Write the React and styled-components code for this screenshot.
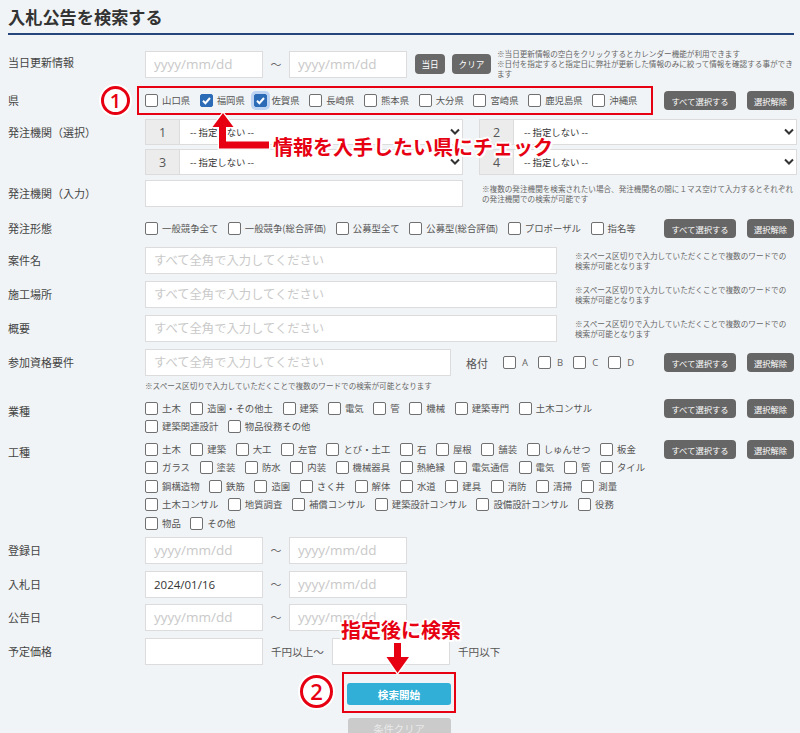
import React from 'react';
import styled, { createGlobalStyle } from 'styled-components';

const RED = '#e60012';

const GlobalStyle = createGlobalStyle`
  html, body { margin: 0; padding: 0; background: #f1f4f6; }
  body { font-family: "Noto Sans CJK JP", "Noto Sans", sans-serif; color: #333; }
  * { box-sizing: border-box; }
`;

const Page = styled.div`
  position: relative;
  width: 800px;
  height: 733px;
  overflow: hidden;
  padding: 4px 6px 0 8px;
`;

const Title = styled.h1`
  margin: 0;
  font-size: 17.2px;
  font-weight: 700;
  line-height: 26px;
  color: #333;
  padding-bottom: 3px;
  border-bottom: 2px solid #26457c;
`;

const Row = styled.div`
  display: flex;
  align-items: flex-start;
  margin-top: ${({ $mt }) => $mt}px;
`;

const Label = styled.div`
  width: 137px;
  flex-shrink: 0;
  font-size: 11px;
  color: #444;
  white-space: nowrap;
  line-height: ${({ $lh }) => $lh}px;
  padding-top: ${({ $pt }) => $pt || 0}px;
`;

const Field = styled.div`
  flex: 1;
  min-width: 0;
  display: flex;
  align-items: center;
  height: ${({ $h }) => ($h ? `${$h}px` : 'auto')};
`;

const Stack = styled.div`
  flex: 1;
  min-width: 0;
  display: flex;
  flex-direction: column;
`;

const TextInput = styled.input`
  width: ${({ $w }) => $w}px;
  height: 27px;
  flex-shrink: 0;
  border: 1px solid #dcdcdc;
  border-radius: 0;
  background: #fff;
  padding: 0 8px;
  font-family: "Open Sans", "Noto Sans CJK JP", sans-serif;
  font-size: 11.5px;
  color: #333;
  outline: none;
  &::placeholder {
    color: #c9c9c9;
    font-size: ${({ $ph }) => $ph || 12.3}px;
  }
`;

const Tilde = styled.span`
  width: 26px;
  flex-shrink: 0;
  text-align: center;
  font-size: 11px;
  color: #666;
`;

const Unit = styled.span`
  font-size: 10.6px;
  color: #555;
  margin: 0 8px;
  white-space: nowrap;
`;

const SmallBtn = styled.button`
  width: ${({ $w }) => $w}px;
  height: 20px;
  flex-shrink: 0;
  margin-left: ${({ $ml }) => $ml}px;
  border: none;
  border-radius: 4px;
  background: #696969;
  color: #fff;
  font-family: inherit;
  font-size: 8.6px;
  padding: 0;
`;

const Note = styled.div`
  width: ${({ $w }) => $w}px;
  margin-left: ${({ $ml }) => $ml || 0}px;
  margin-top: ${({ $mt }) => $mt || 0}px;
  font-size: 7.6px;
  line-height: 10px;
  color: #666;
  flex-shrink: 0;
`;

const ActionGroup = styled.div`
  display: flex;
  gap: 11px;
  margin-left: auto;
  align-self: ${({ $top }) => ($top ? 'flex-start' : 'center')};
`;

const ActionBtn = styled.button`
  width: ${({ $w }) => $w}px;
  height: 19px;
  border: none;
  border-radius: 4px;
  background: #666;
  color: #fff;
  font-family: inherit;
  font-size: 8.3px;
  padding: 0;
`;

const PrefBox = styled.div`
  display: flex;
  align-items: center;
  width: 516px;
  height: 29px;
  margin-left: -8px;
  padding-left: 6px;
  border: 2px solid ${RED};
`;

const CheckItem = styled.label`
  display: inline-flex;
  align-items: center;
  gap: ${({ $gap }) => $gap || 4}px;
  margin-right: ${({ $mr }) => $mr || 9.6}px;
  font-size: 9.4px;
  color: #555;
  white-space: nowrap;
  line-height: 1;
`;

const Box = styled.span`
  width: 13px;
  height: 13px;
  flex-shrink: 0;
  display: inline-flex;
  align-items: center;
  justify-content: center;
  border: 1px solid ${({ $on }) => ($on ? '#2c6cb6' : '#707070')};
  border-radius: 2px;
  background: ${({ $on }) => ($on ? '#2c6cb6' : '#fff')};
  box-shadow: ${({ $focus }) => ($focus ? '0 0 0 3px #bcd4f2' : 'none')};
`;

const Latin = styled.span`
  font-family: "Open Sans", sans-serif;
  font-size: 9.5px;
  color: #666;
`;

const CheckLines = styled.div`
  display: flex;
  flex-direction: column;
`;

const CheckLine = styled.div`
  display: flex;
  align-items: center;
  height: 18.5px;
`;

const SelectGrid = styled.div`
  display: grid;
  grid-template-columns: 318px 318px;
  column-gap: 16px;
  row-gap: 4px;
`;

const SelectBox = styled.div`
  display: flex;
  align-items: center;
  height: 26px;
  background: #fff;
  border: 1px solid #dcdcdc;
`;

const SelectNum = styled.span`
  width: 34px;
  height: 100%;
  display: flex;
  align-items: center;
  justify-content: center;
  background: #ececec;
  border-right: 1px solid #dcdcdc;
  font-family: "Open Sans", sans-serif;
  font-size: 12.5px;
  color: #555;
`;

const SelectText = styled.span`
  flex: 1;
  padding-left: 10px;
  font-size: 9.4px;
  color: #333;
`;

const Kakuduke = styled.span`
  font-size: 11px;
  color: #555;
  margin: 0 15px 0 15px;
`;

const SearchArea = styled.div`
  display: flex;
  flex-direction: column;
  align-items: center;
  padding-right: 4px;
  margin-top: 7px;
`;

const SearchFrame = styled.div`
  position: relative;
  border: 2px solid ${RED};
  padding: 6px 3px;
`;

const SearchBtn = styled.button`
  width: 104px;
  height: 22px;
  border: none;
  border-radius: 3px;
  background: #31afd6;
  color: #fff;
  font-family: inherit;
  font-weight: 700;
  font-size: 10.6px;
  padding: 0;
`;

const ClearBtn = styled.button`
  width: 103px;
  height: 22px;
  margin-top: 4.5px;
  border: none;
  border-radius: 3px;
  background: #cbcbcb;
  color: #e9e9e9;
  font-family: inherit;
  font-size: 10.3px;
  text-decoration: underline;
  padding: 0;
`;

const Marker = styled.div`
  position: absolute;
  left: ${({ $x }) => $x}px;
  top: ${({ $y }) => $y}px;
  width: ${({ $size }) => $size}px;
  height: ${({ $size }) => $size}px;
  display: flex;
  align-items: center;
  justify-content: center;
  border: 3px solid ${RED};
  border-radius: 50%;
  background: #fff;
  box-shadow: 0 0 0 2px #fff;
  color: ${RED};
  font-family: "Open Sans", sans-serif;
  font-weight: 600;
  font-size: ${({ $fs }) => $fs}px;
  line-height: 1;
`;

const Callout = styled.div`
  position: absolute;
  left: ${({ $x }) => $x}px;
  top: ${({ $y }) => $y}px;
  font-size: 20px;
  font-weight: 700;
  line-height: 24px;
  color: ${RED};
  white-space: nowrap;
  text-shadow: 2px 0 #fff, -2px 0 #fff, 0 2px #fff, 0 -2px #fff,
    1.5px 1.5px #fff, -1.5px 1.5px #fff, 1.5px -1.5px #fff, -1.5px -1.5px #fff;
`;

const ArrowSvg = styled.svg`
  position: absolute;
  left: ${({ $x }) => $x}px;
  top: ${({ $y }) => $y}px;
  overflow: visible;
`;

const prefs = [
  { name: '山口県' },
  { name: '福岡県', on: true },
  { name: '佐賀県', on: true, focus: true },
  { name: '長崎県' },
  { name: '熊本県' },
  { name: '大分県' },
  { name: '宮崎県' },
  { name: '鹿児島県' },
  { name: '沖縄県' },
];

const keitai = ['一般競争全て', '一般競争(総合評価)', '公募型全て', '公募型(総合評価)', 'プロポーザル', '指名等'];

const gyoshu = [
  ['土木', '造園・その他土', '建築', '電気', '管', '機械', '建築専門', '土木コンサル'],
  ['建築関連設計', '物品役務その他'],
];

const koshu = [
  ['土木', '建築', '大工', '左官', 'とび・土工', '石', '屋根', '舗装', 'しゅんせつ', '板金'],
  ['ガラス', '塗装', '防水', '内装', '機械器具', '熱絶縁', '電気通信', '電気', '管', 'タイル'],
  ['鋼構造物', '鉄筋', '造園', 'さく井', '解体', '水道', '建具', '消防', '清掃', '測量'],
  ['土木コンサル', '地質調査', '補償コンサル', '建築設計コンサル', '設備設計コンサル', '役務'],
  ['物品', 'その他'],
];

const SPACE_NOTE = '※スペース区切りで入力していただくことで複数のワードでの検索が可能となります';

const Check = ({ label, on, focus, latin }) => (
  <CheckItem $gap={latin ? 6 : 4} $mr={latin ? 10 : 9.6}>
    <Box $on={on} $focus={focus}>
      {on && (
        <svg width="11" height="11" viewBox="0 0 11 11">
          <path d="M2 5.8 L4.4 8.2 L9 3" fill="none" stroke="#fff" strokeWidth="2" />
        </svg>
      )}
    </Box>
    {latin ? <Latin>{label}</Latin> : label}
  </CheckItem>
);

const Actions = ({ top }) => (
  <ActionGroup $top={top}>
    <ActionBtn $w={72}>すべて選択する</ActionBtn>
    <ActionBtn $w={47}>選択解除</ActionBtn>
  </ActionGroup>
);

const Select = ({ n }) => (
  <SelectBox>
    <SelectNum>{n}</SelectNum>
    <SelectText>-- 指定しない --</SelectText>
    <svg width="14" height="8" viewBox="0 0 14 8">
      <polyline points="3,1.5 7,5.5 11,1.5" fill="none" stroke="#333" strokeWidth="2" />
    </svg>
  </SelectBox>
);

const DateRange = ({ from }) => (
  <Field $h={27}>
    <TextInput $w={118} $ph={13.5} placeholder="yyyy/mm/dd" defaultValue={from} />
    <Tilde>〜</Tilde>
    <TextInput $w={118} $ph={13.5} placeholder="yyyy/mm/dd" />
  </Field>
);

const KeywordRow = ({ label, mt }) => (
  <Row $mt={mt}>
    <Label $lh={27}>{label}</Label>
    <Field $h={27}>
      <TextInput $w={412} placeholder="すべて全角で入力してください" />
      <Note $w={216} $ml={18}>{SPACE_NOTE}</Note>
    </Field>
  </Row>
);

const CheckGrid = ({ rows }) => (
  <CheckLines>
    {rows.map((line, i) => (
      <CheckLine key={i}>
        {line.map((t) => (
          <Check key={t} label={t} />
        ))}
      </CheckLine>
    ))}
  </CheckLines>
);

export default function App() {
  return (
    <Page>
      <GlobalStyle />
      <Title>入札公告を検索する</Title>

      <Row $mt={14}>
        <Label $lh={26}>当日更新情報</Label>
        <Field $h={30}>
          <TextInput $w={118} $ph={13.5} placeholder="yyyy/mm/dd" />
          <Tilde>〜</Tilde>
          <TextInput $w={118} $ph={13.5} placeholder="yyyy/mm/dd" />
          <SmallBtn $w={30} $ml={8}>当日</SmallBtn>
          <SmallBtn $w={39} $ml={7}>クリア</SmallBtn>
          <Note $w={297} $ml={6}>
            <div>※当日更新情報の空白をクリックするとカレンダー機能が利用できます</div>
            <div>※日付を指定すると指定日に弊社が更新した情報のみに絞って情報を確認する事ができます</div>
          </Note>
        </Field>
      </Row>

      <Row $mt={7}>
        <Label $lh={29}>県</Label>
        <Field $h={29}>
          <PrefBox>
            {prefs.map((p) => (
              <Check key={p.name} label={p.name} on={p.on} focus={p.focus} />
            ))}
          </PrefBox>
          <Actions />
        </Field>
      </Row>

      <Row $mt={4}>
        <Label $lh={26}>発注機関（選択）</Label>
        <SelectGrid>
          <Select n="1" />
          <Select n="2" />
          <Select n="3" />
          <Select n="4" />
        </SelectGrid>
      </Row>

      <Row $mt={5}>
        <Label $lh={27}>発注機関（入力）</Label>
        <Field $h={27}>
          <TextInput $w={318} />
          <Note $w={314} $ml={19}>
            ※複数の発注機関を検索されたい場合、発注機関名の間に１マス空けて入力するとそれぞれの発注機関での検索が可能です
          </Note>
        </Field>
      </Row>

      <Row $mt={12}>
        <Label $lh={19}>発注形態</Label>
        <Field $h={19}>
          {keitai.map((t) => (
            <Check key={t} label={t} />
          ))}
          <Actions />
        </Field>
      </Row>

      <KeywordRow label="案件名" mt={9} />
      <KeywordRow label="施工場所" mt={7} />
      <KeywordRow label="概要" mt={7} />

      <Row $mt={7}>
        <Label $lh={27}>参加資格要件</Label>
        <Stack>
          <Field $h={27}>
            <TextInput $w={306} placeholder="すべて全角で入力してください" />
            <Kakuduke>格付</Kakuduke>
            {['A', 'B', 'C', 'D'].map((t) => (
              <Check key={t} label={t} latin />
            ))}
            <Actions />
          </Field>
          <Note $w={400} $mt={5}>{SPACE_NOTE}</Note>
        </Stack>
      </Row>

      <Row $mt={8}>
        <Label $lh={18.5} $pt={3}>業種</Label>
        <Field>
          <CheckGrid rows={gyoshu} />
          <Actions top />
        </Field>
      </Row>

      <Row $mt={4}>
        <Label $lh={18.5} $pt={3}>工種</Label>
        <Field>
          <CheckGrid rows={koshu} />
          <Actions top />
        </Field>
      </Row>

      <Row $mt={4}>
        <Label $lh={27}>登録日</Label>
        <DateRange />
      </Row>
      <Row $mt={7}>
        <Label $lh={27}>入札日</Label>
        <DateRange from="2024/01/16" />
      </Row>
      <Row $mt={6}>
        <Label $lh={27}>公告日</Label>
        <DateRange />
      </Row>
      <Row $mt={7}>
        <Label $lh={27}>予定価格</Label>
        <Field $h={27}>
          <TextInput $w={118} />
          <Unit>千円以上～</Unit>
          <TextInput $w={118} />
          <Unit>千円以下</Unit>
        </Field>
      </Row>

      <SearchArea>
        <SearchFrame>
          <Marker $x={-44} $y={1} $size={33} $fs={22}>2</Marker>
          <SearchBtn>検索開始</SearchBtn>
        </SearchFrame>
        <ClearBtn>条件クリア</ClearBtn>
      </SearchArea>

      <Marker $x={101} $y={86} $size={29} $fs={20}>1</Marker>

      <ArrowSvg $x={209} $y={110} width="64" height="42" viewBox="0 0 64 42">
        <path
          d="M14 3 L24.5 17 L17 17 L17 31.5 L60 31.5 L60 38.5 L10 38.5 L10 17 L3.5 17 Z"
          fill={RED}
          stroke="#fff"
          strokeWidth="2.5"
          paintOrder="stroke"
        />
      </ArrowSvg>
      <Callout $x={273} $y={135}>情報を入手したい県にチェック</Callout>

      <Callout $x={341} $y={618}>指定後に検索</Callout>
      <ArrowSvg $x={383} $y={640} width="30" height="36" viewBox="0 0 30 36">
        <path
          d="M11 3 L18 3 L18 17 L26 17 L14.5 33 L3.5 17 L11 17 Z"
          fill={RED}
          stroke="#fff"
          strokeWidth="2.5"
          paintOrder="stroke"
        />
      </ArrowSvg>
    </Page>
  );
}
